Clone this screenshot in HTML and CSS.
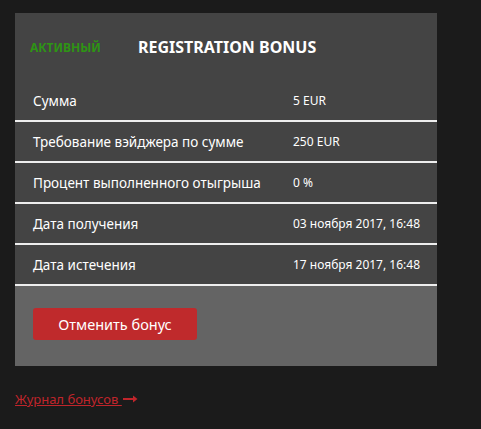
FILE: index.html
```html
<!DOCTYPE html>
<html lang="ru">
<head>
    <meta charset="UTF-8">
    <meta name="viewport" content="width=device-width, initial-scale=1.0">
    <title>Бонус</title>
    <link rel="stylesheet" href="styles.css">
</head>
<body>
    <div class="bonus-card">
        <div class="bonus-head">
            <span class="status">Активный</span>
            <h2>Registration Bonus</h2>
        </div>
        <div class="bonus-row">
            <span class="label">Сумма</span>
            <span class="value">5 EUR</span>
        </div>
        <div class="bonus-row">
            <span class="label">Требование вэйджера по сумме</span>
            <span class="value">250 EUR</span>
        </div>
        <div class="bonus-row">
            <span class="label">Процент выполненного отыгрыша</span>
            <span class="value">0 %</span>
        </div>
        <div class="bonus-row">
            <span class="label">Дата получения</span>
            <span class="value">03 ноября 2017, 16:48</span>
        </div>
        <div class="bonus-row">
            <span class="label">Дата истечения</span>
            <span class="value">17 ноября 2017, 16:48</span>
        </div>
        <div class="bonus-footer">
            <button class="cancel-btn">Отменить бонус</button>
        </div>
    </div>
    <div class="journal">
        <a class="journal-link" href="#">Журнал бонусов </a>
        <svg class="arrow" width="15" height="8" viewBox="0 0 15 8">
            <path d="M0 4H13" stroke="#c0252b" stroke-width="2"/>
            <path d="M10 0.5L14.5 4L10 7.5Z" fill="#c0252b"/>
        </svg>
    </div>
</body>
</html>
```
FILE: styles.css
```css
body {
    font-family: "Noto Sans", Arial, sans-serif;
    background-color: #1b1b1b;
    color: #fff;
    margin: 0;
    padding: 13px 15px;
}
.bonus-card {
    width: 422px;
    background: #444;
}
.bonus-head {
    height: 68px;
    display: flex;
    align-items: center;
    padding-left: 15px;
}
.status {
    width: 108px;
    color: #2e9414;
    font-weight: bold;
    font-size: 12px;
    text-transform: uppercase;
}
.bonus-head h2 {
    margin: 0;
    font-size: 16px;
    text-transform: uppercase;
}
.bonus-row {
    height: 39px;
    display: flex;
    align-items: center;
    padding-left: 18px;
    border-bottom: 2px solid #eee;
    font-size: 13.5px;
}
.label {
    width: 260px;
}
.value {
    font-size: 12px;
}
.bonus-footer {
    background: #646464;
    height: 80px;
    padding: 22px 0 0 18px;
    box-sizing: border-box;
}
.cancel-btn {
    width: 164px;
    height: 32px;
    border: none;
    border-radius: 3px;
    background-color: #bf2a2c;
    color: #fff;
    font-family: inherit;
    font-size: 14.5px;
    cursor: pointer;
}
.journal {
    display: flex;
    align-items: center;
    gap: 1px;
    margin-top: 24px;
}
.journal-link {
    color: #c0252b;
    font-size: 13px;
    white-space: pre;
}
```
